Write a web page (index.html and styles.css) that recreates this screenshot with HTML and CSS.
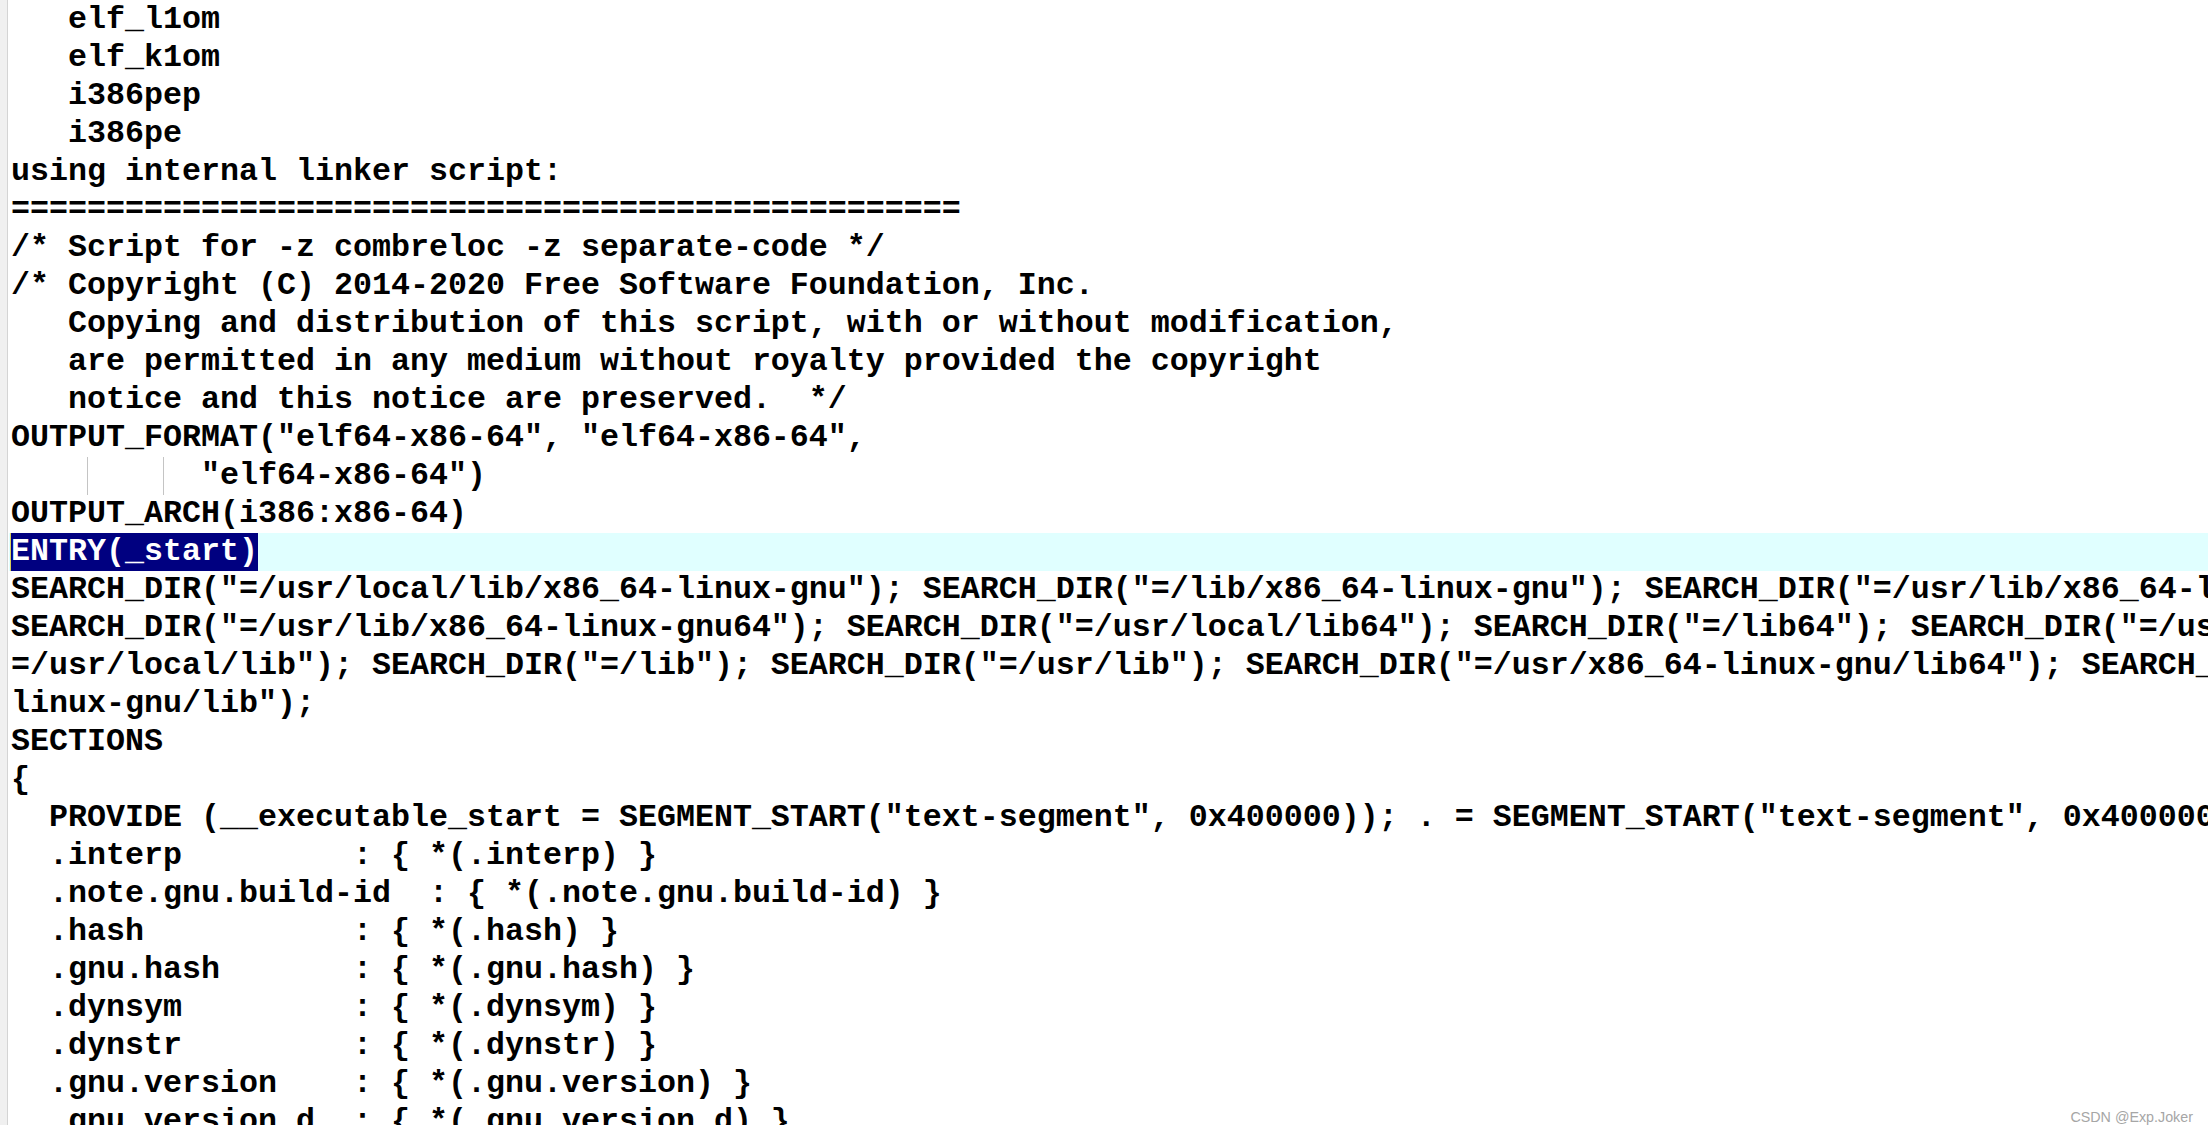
FILE: index.html
```html
<!DOCTYPE html>
<html>
<head>
<meta charset="utf-8">
<link rel="stylesheet" href="styles.css">
</head>
<body>
<div class="window">
<div class="gutter"></div>
<div class="editor">
<div class="line">   elf_l1om</div>
<div class="line">   elf_k1om</div>
<div class="line">   i386pep</div>
<div class="line">   i386pe</div>
<div class="line">using internal linker script:</div>
<div class="line">==================================================</div>
<div class="line">/* Script for -z combreloc -z separate-code */</div>
<div class="line">/* Copyright (C) 2014-2020 Free Software Foundation, Inc.</div>
<div class="line">   Copying and distribution of this script, with or without modification,</div>
<div class="line">   are permitted in any medium without royalty provided the copyright</div>
<div class="line">   notice and this notice are preserved.  */</div>
<div class="line">OUTPUT_FORMAT("elf64-x86-64", "elf64-x86-64",</div>
<div class="line"><span class="tab">    </span><span class="tab guide">    </span><span class="tab2 guide">  </span>"elf64-x86-64")</div>
<div class="line">OUTPUT_ARCH(i386:x86-64)</div>
<div class="line current"><span class="sel">ENTRY(_start)</span></div>
<div class="line">SEARCH_DIR("=/usr/local/lib/x86_64-linux-gnu"); SEARCH_DIR("=/lib/x86_64-linux-gnu"); SEARCH_DIR("=/usr/lib/x86_64-linux-gnu");</div>
<div class="line">SEARCH_DIR("=/usr/lib/x86_64-linux-gnu64"); SEARCH_DIR("=/usr/local/lib64"); SEARCH_DIR("=/lib64"); SEARCH_DIR("=/usr/lib64"); SEARCH_DIR("</div>
<div class="line">=/usr/local/lib"); SEARCH_DIR("=/lib"); SEARCH_DIR("=/usr/lib"); SEARCH_DIR("=/usr/x86_64-linux-gnu/lib64"); SEARCH_DIR("=/usr/x86_64-</div>
<div class="line">linux-gnu/lib");</div>
<div class="line">SECTIONS</div>
<div class="line">{</div>
<div class="line">  PROVIDE (__executable_start = SEGMENT_START("text-segment", 0x400000)); . = SEGMENT_START("text-segment", 0x400000) + SIZEOF_HEADERS;</div>
<div class="line">  .interp         : { *(.interp) }</div>
<div class="line">  .note.gnu.build-id  : { *(.note.gnu.build-id) }</div>
<div class="line">  .hash           : { *(.hash) }</div>
<div class="line">  .gnu.hash       : { *(.gnu.hash) }</div>
<div class="line">  .dynsym         : { *(.dynsym) }</div>
<div class="line">  .dynstr         : { *(.dynstr) }</div>
<div class="line">  .gnu.version    : { *(.gnu.version) }</div>
<div class="line">  .gnu.version_d  : { *(.gnu.version_d) }</div>
<div class="line">  .gnu.version_r  : { *(.gnu.version_r) }</div>
</div>
</div>
<div class="watermark">CSDN @Exp.Joker</div>
</body>
</html>
```
FILE: styles.css
```css
html, body {
  margin: 0;
  padding: 0;
  width: 2208px;
  height: 1125px;
  overflow: hidden;
  background: #ffffff;
}

.window {
  display: flex;
  height: 1125px;
  overflow: hidden;
}

.gutter {
  flex: 0 0 7px;
  background: #f0f0f0;
  border-right: 1px solid #d4d4d4;
  margin-right: 1px;
}

.editor {
  flex: 1;
  min-width: 0;
  overflow: hidden;
  padding-top: 1px;
  font-family: "Liberation Mono", "Courier New", monospace;
  font-weight: bold;
  font-size: 31.67px;
  color: #000000;
}

.line {
  height: 38px;
  line-height: 38px;
  white-space: pre;
  padding-left: 2px;
}

.line.current {
  background: #e0ffff;
}

.sel {
  display: inline-block;
  vertical-align: top;
  height: 38px;
  background: #000080;
  color: #ffffff;
  box-shadow: -1px 0 0 #d8cf5a;
}

.tab, .tab2 {
  display: inline-block;
  vertical-align: top;
  height: 38px;
}

.guide {
  box-shadow: inset 1px 0 0 #c4c4c4;
}

.watermark {
  position: absolute;
  right: 15px;
  bottom: 0;
  font-family: "Liberation Sans", Arial, sans-serif;
  font-size: 14.3px;
  line-height: 16px;
  color: #a6a6a6;
}
```
